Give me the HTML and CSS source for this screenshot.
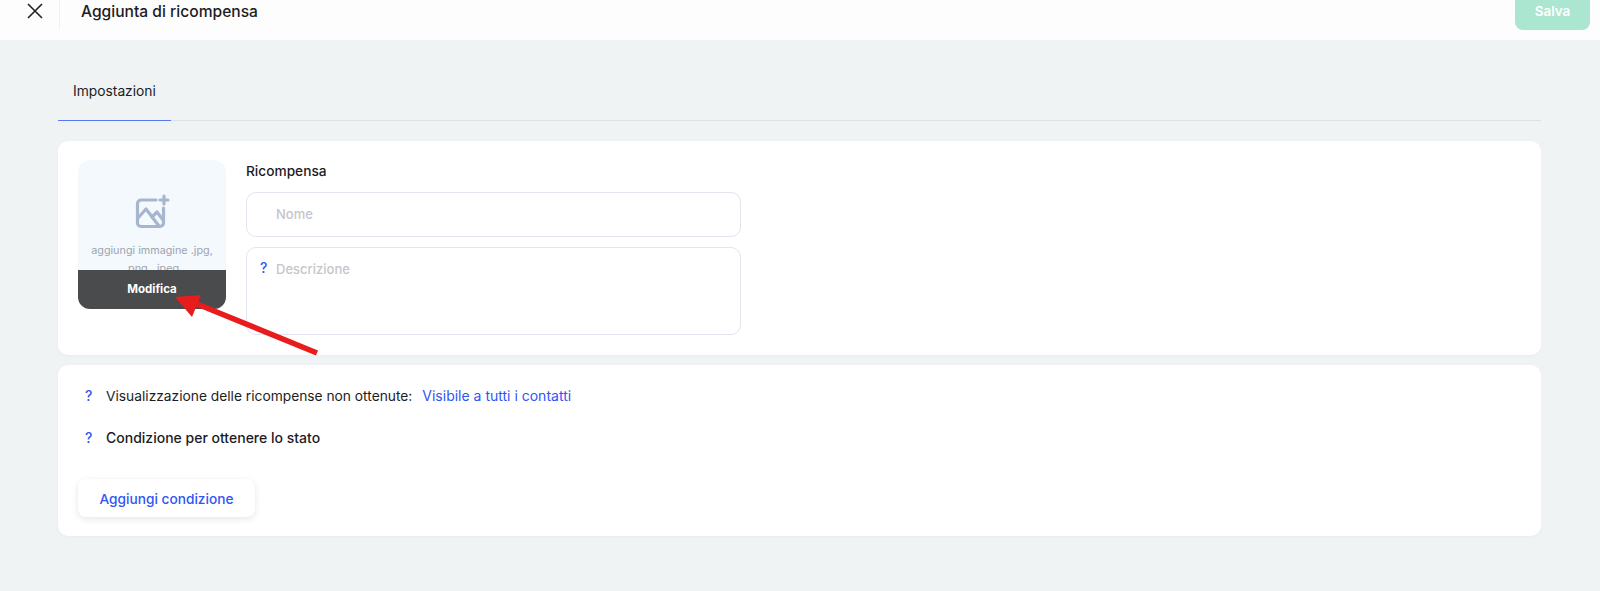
FILE: index.html
```html
<!DOCTYPE html>
<html lang="it">
<head>
<meta charset="utf-8">
<title>Aggiunta di ricompensa</title>
<link rel="stylesheet" href="styles.css">
</head>
<body>
<header class="topbar">
  <button class="close" aria-label="Chiudi">
    <svg width="18" height="18" viewBox="0 0 18 18"><path d="M2 2 L16 16 M16 2 L2 16" stroke="#222" stroke-width="1.6" fill="none"/></svg>
  </button>
  <h1 class="title">Aggiunta di ricompensa</h1>
  <button class="save">Salva</button>
</header>
<main class="content">
  <nav class="tabs"><div class="tab">Impostazioni</div></nav>
  <section class="card card-reward">
    <div class="picture">
      <svg class="picture-icon" width="36" height="36" viewBox="0 0 36 36" fill="none" stroke="#a6b6cf" stroke-width="3.2" stroke-linecap="round" stroke-linejoin="round">
        <path d="M22 6 H7 a3.5 3.5 0 0 0 -3.5 3.5 V29 a3.5 3.5 0 0 0 3.5 3.5 H26 a3.5 3.5 0 0 0 3.5 -3.5 V14"/>
        <path d="M4 24 L12 15 L25 32"/>
        <path d="M18 23 L23 18 L29 26"/>
        <path d="M30 2 V10 M26 6 H34"/>
      </svg>
      <p class="picture-text">aggiungi immagine .jpg, .png, .jpeg</p>
      <div class="picture-edit">Modifica</div>
    </div>
    <div class="fields">
      <div class="label">Ricompensa</div>
      <div class="field field-name"><span class="mark"></span><span class="placeholder">Nome</span></div>
      <div class="field field-desc"><span class="mark">?</span><span class="placeholder">Descrizione</span></div>
    </div>
  </section>
  <section class="card card-conditions">
    <div class="row"><span class="mark">?</span><span class="row-text">Visualizzazione delle ricompense non ottenute:</span><a class="link">Visibile a tutti i contatti</a></div>
    <div class="row row-second"><span class="mark">?</span><span class="strong">Condizione per ottenere lo stato</span></div>
    <button class="add">Aggiungi condizione</button>
  </section>
</main>
<svg class="arrow" width="160" height="70" viewBox="0 0 160 70">
  <path d="M147 63 L27 14" stroke="#e81c1c" stroke-width="5.5" fill="none"/>
  <path d="M5 7 L31 5 L22 27 Z" fill="#e81c1c"/>
</svg>
</body>
</html>
```
FILE: styles.css
```css
* { box-sizing: border-box; }
html, body { margin: 0; height: 100%; }
body {
  position: relative;
  height: 591px;
  overflow: hidden;
  background: #eff3f4;
  font-family: Inter, "Liberation Sans", sans-serif;
  font-size: 14px;
  color: #1c1c24;
}
.topbar {
  height: 40px;
  background: #fdfdfd;
  display: flex;
  align-items: flex-start;
  padding-right: 10px;
}
.close {
  width: 60px;
  height: 30px;
  margin-top: 0;
  padding: 0 0 8px 10px;
  background: none;
  border: 0;
  border-right: 1px solid #f1f1f3;
  display: flex;
  align-items: center;
  justify-content: center;
}
.title {
  margin: 1px 0 0 21px;
  font-size: 15.6px;
  font-weight: 500;
  line-height: 22px;
  color: #1c1c24;
}
.save {
  margin-left: auto;
  width: 75px;
  height: 30px;
  border: 0;
  border-radius: 0 0 8px 8px;
  background: #abe6d0;
  color: #fff;
  font: 600 13.4px/22px Inter, "Liberation Sans", sans-serif;
  padding: 0 0 8px;
}
.content { padding: 0 59px 0 58px; }
.tabs {
  height: 81px;
  display: flex;
  align-items: flex-end;
  border-bottom: 1px solid #dfe0e6;
}
.tab {
  width: 113px;
  height: 62px;
  padding: 23px 0 0 15px;
  margin-bottom: -1px;
  border-bottom: 1px solid #5a78f0;
  font-size: 13.8px;
  line-height: 18px;
}
.card {
  background: #fff;
  border-radius: 10px;
  padding: 19px 20px;
  box-shadow: 0 1px 3px rgba(60, 70, 90, 0.04);
}
.card-reward {
  height: 214px;
  margin-top: 20px;
  display: flex;
  gap: 20px;
}
.picture {
  position: relative;
  width: 148px;
  height: 149px;
  border-radius: 12px;
  background: #f4f9fd;
  overflow: hidden;
  text-align: center;
}
.picture-icon { display: block; margin: 34px auto 0; }
.picture-text {
  margin: 12px 0 0;
  padding: 0 8px;
  font-size: 10.8px;
  line-height: 18px;
  color: #9ea4b0;
}
.picture-edit {
  position: absolute;
  left: 0; right: 0; bottom: 0;
  height: 39px;
  background: #4a4b4d;
  color: #fff;
  font-size: 11.5px;
  font-weight: 700;
  line-height: 38px;
}
.fields { width: 495px; }
.label { font-size: 13.7px; font-weight: 500; line-height: 20px; margin: 1px 0 11px; }
.field {
  display: flex;
  background: #fff;
  border: 1px solid #e4e4ef;
  border-radius: 10px;
}
.field-name { height: 45px; align-items: center; padding-bottom: 2px; }
.field-desc { height: 88px; margin-top: 10px; padding-top: 12px; align-items: flex-start; }
.mark {
  width: 29px;
  flex: none;
  padding-left: 13px;
  color: #2f55f5;
  font-size: 14px;
  font-weight: 500;
  line-height: 18px;
}
.field-desc .mark { margin-top: -1px; }
.placeholder { color: #c5c6cb; font-size: 13px; font-weight: 500; line-height: 18px; }
.card-conditions { height: 171px; margin-top: 10px; padding: 21px 20px 0; }
.row { display: flex; align-items: center; height: 20px; font-size: 14px; line-height: 20px; }
.row .mark { width: 28px; padding-left: 7px; }
.row-second { margin-top: 22px; }
.row-text { font-size: 13.77px; }
.strong { font-weight: 500; }
.link { margin-left: 10px; color: #2f55f5; }
.add {
  display: block;
  width: 177px;
  height: 38px;
  margin-top: 31px;
  padding: 2px 0 0;
  border: 0;
  border-radius: 8px;
  background: #fff;
  color: #2f55f5;
  font: 500 13.7px/36px Inter, "Liberation Sans", sans-serif;
  box-shadow: 0 2px 6px rgba(60, 80, 120, 0.14);
}
.arrow { position: absolute; left: 170px; top: 290px; }
```
